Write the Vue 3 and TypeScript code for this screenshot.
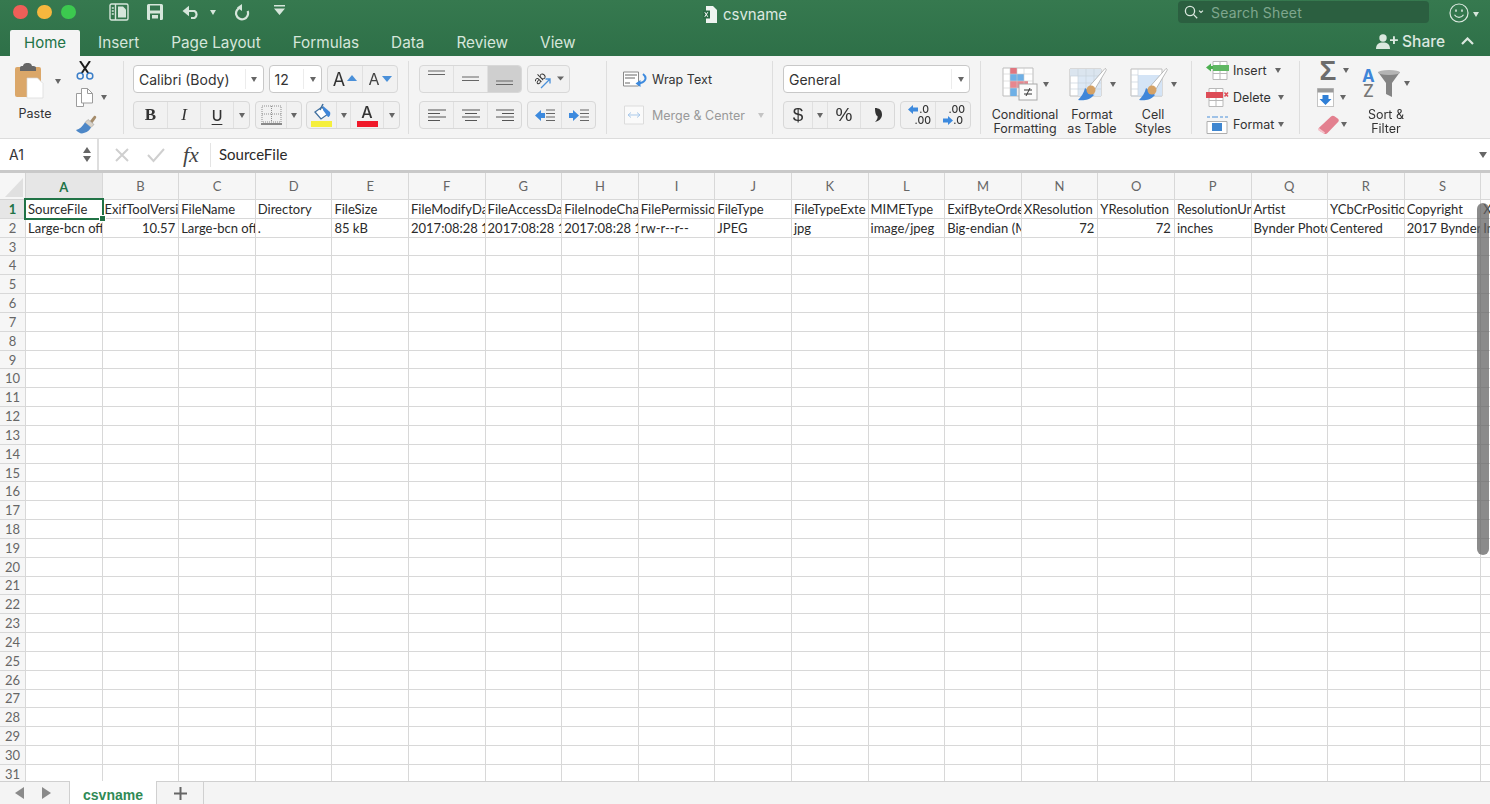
<script setup lang="ts">
const columns = 'ABCDEFGHIJKLMNOPQRST'.split('')
const rowNumbers = Array.from({ length: 31 }, (_, i) => i + 1)
const headerRow = ['SourceFile', 'ExifToolVersi', 'FileName', 'Directory', 'FileSize', 'FileModifyDa', 'FileAccessDa', 'FileInodeCha', 'FilePermissio', 'FileType', 'FileTypeExte', 'MIMEType', 'ExifByteOrde', 'XResolution', 'YResolution', 'ResolutionUn', 'Artist', 'YCbCrPositio', 'Copyright', 'X']
const dataRow = ['Large-bcn off', '10.57', 'Large-bcn off', '.', '85 kB', '2017:08:28 1', '2017:08:28 1', '2017:08:28 1', 'rw-r--r--', 'JPEG', 'jpg', 'image/jpeg', 'Big-endian (M', '72', '72', 'inches', 'Bynder Photo', 'Centered', '2017 Bynder', 'In']
const numericCols = new Set([1, 13, 14])

function cellText(row: number, col: number): string {
  if (row === 1) return headerRow[col]
  if (row === 2) return dataRow[col]
  return ''
}
const tabs = ['Insert', 'Page Layout', 'Formulas', 'Data', 'Review', 'View']
</script>

<template>
  <div class="app">
    <header class="chrome">
      <div class="title-row">
        <div class="title-left">
          <div class="lights">
            <span class="light red"></span><span class="light yellow"></span><span class="light green"></span>
          </div>
          <svg class="qat q1" width="20" height="18" viewBox="0 0 20 18" fill="none" stroke="#d6e6db" stroke-width="1.4">
            <rect x="1" y="1" width="18" height="16" rx="1.5" />
            <path d="M6.5 1v16M2.8 5h2M2.8 8h2M2.8 11h2" />
            <path d="M9 3.5h5l3 3v8H9z" fill="#d6e6db" stroke="none" />
          </svg>
          <svg class="qat q2" width="18" height="18" viewBox="0 0 18 18">
            <path d="M1 2.5A1.5 1.5 0 0 1 2.5 1h13A1.5 1.5 0 0 1 17 2.5v13a1.5 1.5 0 0 1-1.5 1.5h-13A1.5 1.5 0 0 1 1 15.5z" fill="#d6e6db" />
            <rect x="4" y="2.5" width="10" height="5" fill="#35754f" />
            <rect x="4" y="10.5" width="10" height="6.5" fill="#35754f" />
            <rect x="6" y="12" width="6" height="3.5" fill="#d6e6db" />
          </svg>
          <svg class="qat q3" width="19" height="14" viewBox="0 0 19 14" fill="none">
            <path d="M0.5 6 7 .8v10.4z" fill="#d6e6db" />
            <path d="M6 6h6.5a4 4 0 0 1 0 7H9" stroke="#d6e6db" stroke-width="2.2" />
          </svg>
          <span class="caret light-caret q3c"></span>
          <svg class="qat q4" width="16" height="17" viewBox="0 0 16 17" fill="none">
            <path d="M7 3.4A6 6 0 1 0 13.6 7" stroke="#d6e6db" stroke-width="2.2" />
            <path d="M8 0v7l-5-3.500z" fill="#d6e6db" />
          </svg>
          <svg class="qat q5" width="11" height="10" viewBox="0 0 11 10">
            <path d="M0 0h11v1.6H0zM0 3.6h11L5.5 10z" fill="#d6e6db" />
          </svg>
        </div>
        <div class="doc-title">
          <svg width="14" height="17" viewBox="0 0 14 17">
            <path d="M3 0h7l4 4v13H3z" fill="#eef4f0" />
            <rect x="0" y="4.5" width="7" height="8" fill="#2b6a45" />
            <path d="M1.8 6.2l3 4.6M4.8 6.2l-3 4.6" stroke="#fff" stroke-width="1" />
          </svg>
          <span>csvname</span>
        </div>
        <div class="title-right">
          <div class="search">
            <svg width="21" height="15" viewBox="0 0 21 15" fill="none" stroke="#dbe8df" stroke-width="1.3">
              <circle cx="6" cy="6" r="4.6" /><path d="M9.4 9.4l3.8 3.9" />
              <path d="M15 5.600l2 1.900 2-1.900" stroke-width="1.100" />
            </svg>
            <span>Search Sheet</span>
          </div>
          <svg class="smile" width="20" height="20" viewBox="0 0 20 20" fill="none" stroke="#dbe8df" stroke-width="1.2">
            <circle cx="10" cy="10" r="9" />
            <path d="M5.5 11.8c2 3.4 7 3.4 9 0" />
            <path d="M7 6.5v2.2M13 6.5v2.2" stroke-width="1.6" />
          </svg>
          <span class="caret light-caret"></span>
        </div>
      </div>
      <div class="tab-row">
        <nav class="tabs">
          <span class="tab active">Home</span>
          <span v-for="t in tabs" :key="t" class="tab">{{ t }}</span>
        </nav>
        <div class="share">
          <svg width="22" height="15" viewBox="0 0 22 15" fill="#dbe8df">
            <circle cx="7" cy="4" r="3.7" />
            <path d="M0 15c0-5 2.8-6.6 7-6.6s7 1.6 7 6.6z" />
            <path d="M14 5.2h3V2.2h1.9v3h3v1.9h-3v3H17v-3h-3z" />
          </svg>
          <span>Share</span>
          <svg class="chev" width="13" height="8" viewBox="0 0 13 8" fill="none" stroke="#dbe8df" stroke-width="2.2"><path d="M1 7l5.5-5.5L12 7" /></svg>
        </div>
      </div>
    </header>

    <section class="ribbon">
      <!-- Clipboard -->
      <div class="group clipboard">
        <div class="paste">
          <div class="paste-top">
            <svg width="29" height="36" viewBox="0 0 29 36">
              <rect x="0" y="4" width="26" height="30" rx="2" fill="#dba769" />
              <path d="M5 4.5C5 3 6.5 3 8 3c.6-2 1.2-3 4.5-3S16.500 1 17 3c1.500 0 4 0 4 1.500V8H5z" fill="#666" />
              <path d="M12 15h10.500l5.500 5.500V35H12z" fill="#fff" stroke="#d8d8d8" stroke-width=".7" />
            </svg>
            <span class="caret"></span>
          </div>
          <span class="label">Paste</span>
        </div>
        <div class="clip-tools">
          <svg width="18" height="19" viewBox="0 0 18 19" fill="none">
            <path d="M4 0l8.500 12.500M14 0L5.500 12.500" stroke="#1c1c1c" stroke-width="2" />
            <circle cx="4.200" cy="15" r="3" stroke="#3c7fc9" stroke-width="1.500" />
            <circle cx="13.800" cy="15" r="3" stroke="#3c7fc9" stroke-width="1.500" />
          </svg>
          <div class="copy-row">
            <svg width="17" height="19" viewBox="0 0 17 19" fill="#fff" stroke="#9b9b9b">
              <path d="M.5 5.500h7v13h-7z" />
              <path d="M5.500.5h6l5 5v9.500h-11z" />
              <path d="M11.500.5v5h5" fill="none" />
            </svg>
            <span class="caret"></span>
          </div>
          <svg width="21" height="19" viewBox="0 0 21 19">
            <path d="M14 6l4-5c1-1 3 .5 2 2l-3.500 5z" fill="#a58c6b" />
            <path d="M12 4.500l6 5-3 3L9 7.500z" fill="#d9d2c7" stroke="#8d8d8d" stroke-width=".5" />
            <path d="M9 7.500l6 5c-1.500 3-4 5-9 6-2 0-5-2-6-3.500 4-1 6-3.500 9-7.500z" fill="#4d87c7" />
          </svg>
        </div>
      </div>

      <!-- Font -->
      <div class="group font">
        <div class="row">
          <div class="select font-name"><span class="value">Calibri (Body)</span><i class="drop"><span class="caret"></span></i></div>
          <div class="select font-size"><span class="value">12</span><i class="drop"><span class="caret"></span></i></div>
          <div class="bgroup grow">
            <span class="btn w35 big-a">A<svg width="10" height="6" viewBox="0 0 10 6"><path d="M5 0l5 6H0z" fill="#4a90d9" /></svg></span>
            <span class="btn w34 small-a">A<svg width="10" height="6" viewBox="0 0 10 6"><path d="M5 6L0 0h10z" fill="#4a90d9" /></svg></span>
          </div>
        </div>
        <div class="row">
          <div class="bgroup">
            <span class="btn w34 bold">B</span>
            <span class="btn w33 italic">I</span>
            <span class="btn w33 under">U</span>
            <span class="btn w15"><span class="caret"></span></span>
          </div>
          <div class="bgroup">
            <span class="btn w31">
              <svg width="21" height="20" viewBox="0 0 21 20" fill="none">
                <path d="M1 1h19v16H1zM10.500 1v16M1 9h19" stroke="#8f8f8f" stroke-dasharray="1 1" />
                <path d="M0 19h21" stroke="#666" stroke-width="1.500" />
              </svg>
            </span>
            <span class="btn w14"><span class="caret"></span></span>
          </div>
          <div class="bgroup last-g">
            <span class="btn w30">
              <svg width="22" height="24" viewBox="0 0 22 24">
                <path d="M4 9l7-5 6 7-7 5z" fill="#fff" stroke="#41709f" stroke-width="1.300" />
                <path d="M9 7l3-6" stroke="#41709f" stroke-width="1.500" />
                <path d="M12 3l7 6c1 3-1 5-2 5l-5-7z" fill="#3f86d9" />
                <rect x="0" y="18" width="21" height="6" fill="#f5ef3d" />
              </svg>
            </span>
            <span class="btn w14"><span class="caret"></span></span>
            <span class="btn w33 color-a"><span class="color-letter">A</span><i class="redbar"></i></span>
            <span class="btn w15"><span class="caret"></span></span>
          </div>
        </div>
      </div>

      <!-- Alignment -->
      <div class="group align">
        <div class="row">
          <div class="bgroup">
            <span class="btn w34"><svg width="17" height="10" viewBox="0 0 17 10" class="a-top"><path d="M0 1h17M0 4.500h17" stroke="#666" stroke-width="1.100" /></svg></span>
            <span class="btn w34"><svg width="17" height="10" viewBox="0 0 17 10" class="a-mid"><path d="M0 1h17M0 4.500h17" stroke="#666" stroke-width="1.100" /></svg></span>
            <span class="btn w33 pressed"><svg width="17" height="10" viewBox="0 0 17 10" class="a-bot"><path d="M0 1h17M0 4.500h17" stroke="#666" stroke-width="1.100" /></svg></span>
          </div>
          <div class="bgroup">
            <span class="btn w41">
              <svg width="36" height="22" viewBox="0 0 36 22">
                <text x="3" y="14" font-family="Inter, sans-serif" font-size="11" fill="#333" transform="rotate(-45 9 11)">ab</text>
                <path d="M10 20l9-9M14.500 11H19v4.500" fill="none" stroke="#4a90d9" stroke-width="1.300" />
                <path d="M26 8.500h7l-3.500 4z" fill="#666" />
              </svg>
            </span>
          </div>
        </div>
        <div class="row">
          <div class="bgroup">
            <span class="btn w34"><svg width="18" height="13" viewBox="0 0 18 13"><path d="M0 1h18M0 4.500h12M0 8h18M0 11.500h12" stroke="#555" stroke-width="1.100" /></svg></span>
            <span class="btn w34"><svg width="18" height="13" viewBox="0 0 18 13"><path d="M0 1h18M3 4.500h12M0 8h18M3 11.500h12" stroke="#555" stroke-width="1.100" /></svg></span>
            <span class="btn w33"><svg width="18" height="13" viewBox="0 0 18 13"><path d="M0 1h18M6 4.500h12M0 8h18M6 11.500h12" stroke="#555" stroke-width="1.100" /></svg></span>
          </div>
          <div class="bgroup">
            <span class="btn w34">
              <svg width="20" height="13" viewBox="0 0 20 13"><path d="M0 6.500L6 1v3h4v5H6v3z" fill="#3d8ade" /><path d="M11 1h9M11 4.500h9M11 8h9M11 11.500h9" stroke="#666" stroke-width="1.100" /></svg>
            </span>
            <span class="btn w33">
              <svg width="20" height="13" viewBox="0 0 20 13"><path d="M10 6.500L4 1v3H0v5h4v3z" fill="#3d8ade" /><path d="M11 1h9M11 4.500h9M11 8h9M11 11.500h9" stroke="#666" stroke-width="1.100" /></svg>
            </span>
          </div>
        </div>
      </div>

      <!-- Wrap / merge -->
      <div class="group wrap">
        <div class="wrap-row">
          <svg width="24" height="16" viewBox="0 0 24 16" fill="none">
            <path d="M.5 1h15v14H.5z" stroke="#8a8a8a" fill="#fff" />
            <path d="M2 4h12M2 7h10M2 12h5" stroke="#666" />
            <path d="M20 3c5 4 2 9-5 9.500" stroke="#3d8ade" stroke-width="2" />
            <path d="M17.500 9v7l-5-3.500z" fill="#3d8ade" />
          </svg>
          <span>Wrap Text</span>
        </div>
        <div class="wrap-row muted">
          <svg width="24" height="20" viewBox="0 0 24 20" fill="none">
            <path d="M1.500 1h19v18h-19z" fill="#fafafa" stroke="#dcdcdc" />
            <path d="M5 10h12M5 10l3-2.500M5 10l3 2.500M17 10l-3-2.500M17 10l-3 2.500" stroke="#a9c9ea" />
          </svg>
          <span>Merge &amp; Center</span>
          <span class="caret pale"></span>
        </div>
      </div>

      <!-- Number -->
      <div class="group number">
        <div class="row">
          <div class="select general"><span class="value">General</span><i class="drop"><span class="caret"></span></i></div>
        </div>
        <div class="row">
          <div class="bgroup">
            <span class="btn w29 sym">$</span>
            <span class="btn w15"><span class="caret"></span></span>
            <span class="btn w33 sym">%</span>
            <span class="btn w33">
              <svg width="8" height="14" viewBox="0 0 8 14"><path d="M1 0c4 0 7 2 7 6.500 0 4-3 6.500-7 7.500 2-2 3-4 2.500-6C1.500 7.500 1 3 1 0z" fill="#333" /></svg>
            </span>
          </div>
          <div class="bgroup grow">
            <span class="btn w35 dec">
              <svg width="10" height="9" viewBox="0 0 10 9"><path d="M0 4.500L5 0v2.500h5v4H5V9z" fill="#3d8ade" /></svg>
              <span class="dec-a">.0</span><span class="dec-b">.00</span>
            </span>
            <span class="btn w34 dec">
              <span class="dec-c">.00</span><span class="dec-d">.0</span>
              <svg class="dec-arrow" width="10" height="9" viewBox="0 0 10 9"><path d="M10 4.500L5 0v2.500H0v4h5V9z" fill="#3d8ade" /></svg>
            </span>
          </div>
        </div>
      </div>

      <!-- Styles -->
      <div class="group styles">
        <div class="style-item w74">
          <div class="style-icon">
            <svg width="36" height="34" viewBox="0 0 36 34">
              <path d="M1 1h30v28H1z" fill="#fff" stroke="#bdbdbd" />
              <rect x="8" y="1" width="7" height="6" fill="#e0757f" />
              <rect x="8" y="7" width="14" height="7" fill="#6fb0e6" />
              <rect x="8" y="14" width="7" height="7" fill="#6fb0e6" />
              <rect x="8" y="14" width="18" height="7" fill="#e8878f" />
              <rect x="8" y="21" width="7" height="8" fill="#6fb0e6" />
              <path d="M8 1v28M15 1v28M22 1v28M1 7h30M1 14h30M1 21h30" stroke="#cfcfcf" stroke-width=".6" />
              <rect x="17" y="17" width="18" height="16" fill="#fbfbfb" stroke="#a8a8a8" />
              <path d="M22 23h8M22 27h8M28 21l-4 8" stroke="#333" stroke-width="1" fill="none" />
            </svg>
            <span class="caret"></span>
          </div>
          <span class="label">Conditional<br />Formatting</span>
        </div>
        <div class="style-item w60">
          <div class="style-icon tight">
            <svg width="38" height="34" viewBox="0 0 38 34">
              <path d="M1 2h31v27H1z" fill="#fff" stroke="#bdbdbd" />
              <rect x="1" y="2" width="31" height="7" fill="#dbe5ef" />
              <rect x="9" y="9" width="23" height="20" fill="#dce8f5" />
              <path d="M9 2v27M17 2v27M25 2v27M1 9h31M1 16h31M1 22h31" stroke="#c8d2dc" stroke-width=".7" />
              <path d="M36 1.500c1 0 1.500 1 1 2L26 22l-5-3.500z" fill="#fff" stroke="#a0a0a0" stroke-width=".7" />
              <path d="M16 21c-1 5-4 9-7 12 5 1 12 0 16-5z" fill="#3f86d9" />
              <circle cx="22" cy="23" r="4.500" fill="#d5a266" />
            </svg>
            <span class="caret"></span>
          </div>
          <span class="label">Format<br />as Table</span>
        </div>
        <div class="style-item w62">
          <div class="style-icon tight">
            <svg width="38" height="34" viewBox="0 0 38 34">
              <path d="M1 2h31v27H1z" fill="#fff" stroke="#bdbdbd" />
              <rect x="8" y="8" width="24" height="21" fill="#d4e4f6" />
              <path d="M8 2v6M1 8h7M1 15h7M1 22h7M8 8v21M1 29h31" stroke="#c8d2dc" stroke-width=".7" />
              <path d="M36 1.500c1 0 1.500 1 1 2L26 22l-5-3.500z" fill="#fff" stroke="#a0a0a0" stroke-width=".7" />
              <path d="M16 21c-1 5-4 9-7 12 5 1 12 0 16-5z" fill="#3f86d9" />
              <circle cx="22" cy="23" r="4.500" fill="#d5a266" />
            </svg>
            <span class="caret"></span>
          </div>
          <span class="label">Cell<br />Styles</span>
        </div>
      </div>

      <!-- Cells -->
      <div class="group cells">
        <div class="cell-row r1">
          <svg width="23" height="19" viewBox="0 0 23 19">
            <path d="M7 .5h14v18H7zM14 .5v18M7 6h14M7 12.500h14" fill="#fff" stroke="#b9b9b9" />
            <path d="M0 6.500L5 2.500v2.500h2V8H5v2.500z" fill="#4caf50" />
            <rect x="7" y="4" width="16" height="6" fill="#5fb763" />
          </svg>
          <span>Insert</span><span class="caret"></span>
        </div>
        <div class="cell-row r2">
          <svg width="23" height="19" viewBox="0 0 23 19">
            <path d="M3 .5h14v18H3zM10 .5v18M3 6h14M3 12.500h14" fill="#fff" stroke="#b9b9b9" />
            <rect x="0" y="4" width="17" height="6" fill="#dd4d57" />
            <path d="M18.500 4.500l3.500 4M22 4.500l-3.500 4" stroke="#dd4d57" stroke-width="1.500" />
          </svg>
          <span>Delete</span><span class="caret"></span>
        </div>
        <div class="cell-row r3">
          <svg width="23" height="19" viewBox="0 0 23 19">
            <path d="M1 2h3M6 2h6M14 2h3M19 2h3" stroke="#4a90d9" stroke-width="1.200" />
            <path d="M1 6.500h20v12H1z" fill="#fff" stroke="#aeaeae" />
            <rect x="6" y="8" width="10" height="8" fill="#3f86d0" />
          </svg>
          <span>Format</span><span class="caret"></span>
        </div>
      </div>

      <!-- Editing -->
      <div class="editing">
        <div class="edit-col">
          <div class="edit-row e1"><span class="sigma">Σ</span><span class="caret"></span></div>
          <div class="edit-row e2">
            <svg width="18" height="19" viewBox="0 0 18 19">
              <rect x=".5" y=".5" width="16" height="18" fill="#fff" stroke="#c4c4c4" />
              <rect x=".5" y=".5" width="16" height="4" fill="#9a9a9a" />
              <path d="M5.500 7h6v4h3L8.500 17 2.500 11h3z" fill="#2f7fd6" />
            </svg>
            <span class="caret"></span>
          </div>
          <div class="edit-row e3">
            <svg width="23" height="20" viewBox="0 0 23 20">
              <path d="M14 1.500c1-1 2.500-1 3.500-.3l3.500 2.500c1 .8 1 2 .3 3L10.500 18c-.8 1-2 1.300-3 .7l-5-3c-1-.7-1.300-2-.5-3z" fill="#e3808f" />
              <path d="M2 13l6 4.500-1 1.300-5-3c-1-.7-1-1.800 0-2.800z" fill="#f5c2ca" />
            </svg>
            <span class="caret"></span>
          </div>
        </div>
        <div class="sort">
          <div class="sort-icon">
            <svg class="sort-svg" width="40" height="30" viewBox="0 0 40 30">
              <text x="0" y="14" font-family="Inter, sans-serif" font-weight="700" font-size="17" fill="#3f86d9">A</text>
              <text x="1" y="29" font-family="Inter, sans-serif" font-weight="500" font-size="17" fill="#777">Z</text>
              <path d="M16 4h22l-8 11v14l-6-3V15z" fill="#848484" />
              <ellipse cx="27" cy="4.500" rx="11" ry="2.500" fill="#b4b4b4" />
            </svg>
            <span class="caret"></span>
          </div>
          <span class="label">Sort &amp;<br />Filter</span>
        </div>
      </div>
    </section>

    <section class="formula">
      <div class="namebox">
        <span>A1</span>
        <span class="spin"><i class="up"></i><i class="down"></i></span>
      </div>
      <div class="f-tools">
        <svg width="16" height="16" viewBox="0 0 16 16" fill="none" stroke="#cfcfcf" stroke-width="2"><path d="M2 2l12 12M14 2L2 14" /></svg>
        <svg width="18" height="16" viewBox="0 0 18 16" fill="none" stroke="#cfcfcf" stroke-width="2"><path d="M1 8l5.500 6L17 2" /></svg>
        <span class="fx">fx</span>
      </div>
      <div class="f-text">SourceFile</div>
      <span class="caret f-caret"></span>
    </section>

    <section class="sheet">
      <div class="grid">
        <div class="corner"><i></i></div>
        <div v-for="(c, ci) in columns" :key="c" class="col-head" :class="{ on: ci === 0 }">{{ c }}</div>
        <template v-for="r in rowNumbers" :key="r">
          <div class="row-head" :class="{ on: r === 1 }">{{ r }}</div>
          <div
            v-for="(c, ci) in columns"
            :key="c + r"
            class="cell"
            :class="{ num: r === 2 && numericCols.has(ci), selected: r === 1 && ci === 0 }"
          >
            <span class="cell-text">{{ cellText(r, ci) }}</span>
            <template v-if="r === 1 && ci === 0"><i class="sel-box"></i><i class="sel-handle"></i></template>
          </div>
        </template>
      </div>
      <div class="scroll-thumb"></div>
    </section>

    <footer class="sheetbar">
      <div class="nav">
        <svg width="9" height="12" viewBox="0 0 9 12"><path d="M9 0v12L0 6z" fill="#8a8a8a" /></svg>
        <svg width="9" height="12" viewBox="0 0 9 12"><path d="M0 0v12l9-6z" fill="#8a8a8a" /></svg>
      </div>
      <div class="sheet-tab">csvname</div>
      <div class="add">
        <svg width="13" height="13" viewBox="0 0 13 13"><path d="M6.500 0v13M0 6.500h13" stroke="#666" stroke-width="2" /></svg>
      </div>
    </footer>
  </div>
</template>

<style>
html, body { margin: 0; overflow: hidden; background: #fff; }
</style>

<style scoped>
.app {
  width: 1490px; height: 804px; overflow: hidden; display: flex; flex-direction: column;
  font-family: Inter, "Liberation Sans", sans-serif; color: #333; filter: blur(0.35px);
}
i { font-style: normal; display: block; }
.caret {
  display: inline-block; flex: none; width: 0; height: 0;
  border-left: 3.5px solid transparent; border-right: 3.5px solid transparent; border-top: 5px solid #666;
}
.caret.pale { border-top-color: #c4c4c4; }
.light-caret { border-top-color: #d6e6db; }

/* title bar */
.chrome { height: 56px; flex: none; background: linear-gradient(#36794f, #2e7048); color: #d6e6db; }
.title-row { height: 28px; display: grid; grid-template-columns: 1fr auto 1fr; align-items: center; }
.title-left { display: flex; align-items: center; margin-top: -4px; }
.lights { display: flex; gap: 9.500px; margin-left: 13px; }
.light { width: 14.500px; height: 14.500px; border-radius: 50%; }
.light.red { background: #ee5f58; }
.light.yellow { background: #f6b73e; }
.light.green { background: #3cc94f; }
.qat { flex: none; }
.q1 { margin-left: 33px; }
.q2 { margin-left: 17px; }
.q3 { margin-left: 18px; }
.q3c { margin-left: 9px; }
.q4 { margin-left: 18px; }
.q5 { margin-left: 24px; margin-top: -4px; }
.doc-title { display: flex; align-items: center; gap: 6px; font-size: 15px; color: #dce8e0; }
.title-right { display: flex; align-items: center; justify-content: flex-end; }
.search {
  width: 251px; height: 22px; box-sizing: border-box; background: #2b5f40; border-radius: 4px; margin-top: -4px;
  display: flex; align-items: center; gap: 6px; padding-left: 6px; font-size: 14px; color: #7fa78e; letter-spacing: .2px;
}
.smile { margin-left: 20px; margin-top: -2px; }
.title-right .caret { margin: 0 11px 0 4px; }
.tab-row { height: 28px; display: flex; justify-content: space-between; align-items: flex-end; }
.tabs { display: flex; margin-left: 10px; }
.tab { padding: 0 16px; height: 26px; line-height: 26px; font-size: 15.300px; color: #d6e6db; white-space: nowrap; }
.tab.active { padding: 0 14px; margin-right: 2px; background: #f4f4f4; color: #217346; border-radius: 2px 2px 0 0; font-size: 15px; }
.share { display: flex; align-items: center; height: 28px; font-size: 15.500px; font-weight: 500; color: #dce8e0; margin-right: 16px; gap: 4px; padding-bottom: 2px; box-sizing: border-box; }
.chev { margin-left: 12px; }

/* ribbon */
.ribbon { height: 82px; flex: none; background: #f4f4f4; border-bottom: 1px solid #dcdcdc; display: flex; align-items: flex-start; }
.group { height: 73px; margin-top: 5px; box-sizing: border-box; border-right: 1px solid #dedede; flex: none; }
.label { font-size: 12.500px; line-height: 14px; color: #333; text-align: center; white-space: nowrap; }
.clipboard { width: 124px; display: flex; }
.paste { width: 72px; padding-left: 15px; box-sizing: border-box; display: flex; flex-direction: column; }
.paste-top { display: flex; align-items: center; gap: 11px; height: 39px; }
.paste-top .caret { margin-top: 2px; }
.paste .label { width: 40px; margin-top: 7px; }
.clip-tools { display: flex; flex-direction: column; gap: 8px; padding-left: 4px; }
.copy-row { display: flex; align-items: center; gap: 8px; }

.row { display: flex; gap: 5px; height: 28px; }
.font, .align, .number { padding-top: 4px; display: flex; flex-direction: column; gap: 8px; }
.font { width: 285px; padding-left: 9px; }
.font .row { width: 265px; }
.align { width: 198px; padding-left: 10px; }
.number { width: 208px; padding-left: 10px; }
.number .row { width: 187px; }
.select {
  background: #fff; border: 1px solid #c8c8c8; border-radius: 4px; box-sizing: border-box; height: 28px;
  display: flex; align-items: center; font-size: 14px; color: #333;
}
.select .value { flex: 1; padding-left: 5px; white-space: nowrap; }
.drop { width: 17px; height: 20px; border-left: 1px solid #ececec; display: flex; align-items: center; justify-content: center; }
.font-name { width: 132px; }
.font-size { width: 54px; }
.general { width: 187px; }
.bgroup {
  display: flex; height: 28px; box-sizing: border-box; background: #f1f1f1; border: 1px solid #d8d8d8; border-radius: 4px; flex: none;
}
.grow { flex: 1; }
.last-g { margin-left: -1px; flex: 1; }
.btn { display: flex; align-items: center; justify-content: center; box-sizing: border-box; border-right: 1px solid #e0e0e0; position: relative; flex: none; font-size: 14px; }
.btn:last-child { border-right: 0; }
.grow .btn:last-child { flex: 1; }
.w14 { width: 14px; } .w15 { width: 15px; } .w29 { width: 29px; } .w30 { width: 30px; } .w31 { width: 31px; }
.w33 { width: 33px; } .w34 { width: 34px; } .w35 { width: 35px; } .w41 { width: 41px; }
.pressed { background: #cfcfcf; border-radius: 0 3px 3px 0; }
.a-top { margin-top: -9px; }
.a-mid { margin-top: 3px; }
.a-bot { margin-top: 11px; }
.big-a { font-size: 18px; gap: 2px; color: #333; }
.big-a svg { margin-bottom: 3px; }
.small-a { font-size: 16px; gap: 2px; color: #444; }
.bold { font-family: "Liberation Serif", serif; font-weight: 700; font-size: 17px; }
.italic { font-family: "Liberation Serif", serif; font-style: italic; font-size: 17px; }
.under { font-size: 14.500px; text-decoration: underline; text-underline-offset: 3px; font-weight: 500; }
.color-a { flex-direction: column; justify-content: flex-start; }
.color-letter { font-size: 16px; font-weight: 500; line-height: 18px; margin-top: 1px; }
.redbar { width: 21px; height: 6px; background: #f0192a; }
.sym { font-size: 19px; font-family: "Liberation Sans", sans-serif; }
.dec { position: relative; font-size: 10.500px; color: #333; font-weight: 500; }
.dec svg { position: absolute; left: 7px; top: 3px; }
.dec svg.dec-arrow { left: 7px; top: 14px; }
.dec-a { position: absolute; right: 6px; top: 1px; }
.dec-b { position: absolute; right: 4px; top: 12px; }
.dec-c { position: absolute; right: 5px; top: 1px; }
.dec-d { position: absolute; right: 7px; top: 12px; }

.wrap { width: 166px; padding-left: 16px; display: flex; flex-direction: column; font-size: 12.500px; }
.wrap-row { display: flex; align-items: center; gap: 5px; height: 20px; margin-top: 8px; white-space: nowrap; color: #333; }
.wrap-row.muted { margin-top: 16px; color: #999; }
.wrap-row.muted .caret { margin-left: 8px; }

.styles { width: 211px; display: flex; padding-left: 7px; }
.style-item { display: flex; flex-direction: column; align-items: center; flex: none; }
.w74 { width: 74px; } .w60 { width: 60px; } .w62 { width: 62px; }
.style-icon { display: flex; align-items: center; gap: 5px; height: 34px; margin-top: 6px; margin-bottom: 6.500px; }
.style-icon.tight { gap: 3px; }

.cells { width: 108px; padding-left: 14px; display: flex; flex-direction: column; justify-content: center; gap: 9px; font-size: 12.500px; }
.cell-row { display: flex; align-items: center; height: 18px; white-space: nowrap; }
.cell-row svg { margin-right: 4px; flex: none; }
.r1 .caret { margin-left: 8px; }
.r2 .caret { margin-left: 7px; }
.r3 .caret { margin-left: 4px; }
.editing { display: flex; margin-top: 5px; height: 73px; padding-left: 17px; }
.edit-col { width: 45px; display: flex; flex-direction: column; justify-content: center; gap: 9px; }
.edit-row { display: flex; align-items: center; height: 18px; }
.e1 { gap: 4px; }
.e2 { gap: 5px; }
.e3 { gap: 1px; }
.sigma { width: 22px; font-size: 28px; font-weight: 700; color: #6c6c6c; line-height: 18px; font-family: "Liberation Sans", sans-serif; text-align: center; }
.sort { display: flex; flex-direction: column; align-items: center; width: 48px; }
.sort-svg { overflow: visible; }
.sort-icon { display: flex; align-items: center; gap: 2px; height: 30px; margin-top: 7px; margin-bottom: 10px; }

/* formula bar */
.formula { height: 31px; flex: none; background: #fff; border-bottom: 3px solid #c9c9c9; display: flex; align-items: center; position: relative; }
.namebox { width: 99px; height: 31px; box-sizing: border-box; border-right: 2px solid #dedede; display: flex; align-items: center; justify-content: space-between; padding-left: 9px; font-size: 14px; color: #333; flex: none; }
.spin { display: flex; flex-direction: column; gap: 3px; margin-right: 6px; }
.spin .up { border-left: 4px solid transparent; border-right: 4px solid transparent; border-bottom: 6px solid #666; }
.spin .down { border-left: 4px solid transparent; border-right: 4px solid transparent; border-top: 6px solid #666; }
.f-tools { width: 112px; height: 24px; box-sizing: border-box; display: flex; align-items: center; border-right: 1px solid #e4e4e4; padding-left: 15px; gap: 17px; flex: none; }
.fx { font-family: "Liberation Serif", serif; font-style: italic; font-size: 22px; color: #444; margin-left: 1px; }
.f-text { padding-left: 8px; padding-bottom: 2px; font-family: Lato, sans-serif; font-size: 15px; color: #2a2a2a; }
.f-caret { position: absolute; right: 3px; top: 13px; border-left-width: 4px; border-right-width: 4px; border-top-width: 6px; }

/* sheet */
.sheet { position: relative; flex: 1; min-height: 0; overflow: hidden; background: #fff; }
.grid {
  display: grid; width: max-content; grid-template-columns: 26px repeat(20, 76.6px); grid-template-rows: 27px repeat(31, 18.83px);
  font-family: Lato, "Liberation Sans", sans-serif; font-size: 13px; color: #2a2a2a;
}
.corner { background: #f6f6f6; border-right: 1px solid #d4d4d4; border-bottom: 1px solid #d4d4d4; box-sizing: border-box; position: relative; }
.corner i { position: absolute; left: 5px; bottom: 2px; width: 0; height: 0; border-left: 18px solid transparent; border-bottom: 19px solid #e0e0e0; }
.col-head, .row-head {
  background: #f6f6f6; box-sizing: border-box; border-right: 1px solid #d8d8d8; border-bottom: 1px solid #d8d8d8;
  display: flex; align-items: center; justify-content: center; color: #666; font-size: 13px;
}
.col-head.on { background: #e6e6e6; color: #217346; font-weight: 700; border-bottom: 0; }
.row-head.on { background: #e6e6e6; color: #217346; font-weight: 700; }
.cell {
  box-sizing: border-box; border-right: 1px solid #d8d8d8; border-bottom: 1px solid #d8d8d8; overflow: hidden;
  white-space: nowrap; padding: 0 0 0 2px; line-height: 18px; min-width: 0; position: relative;
}
.cell-text { display: block; }
.cell.num { text-align: right; padding-right: 3px; }
.cell.selected { overflow: visible; }
.sel-box { position: absolute; left: -2px; top: -2px; right: -2px; bottom: -2px; border: 2px solid #217346; z-index: 2; pointer-events: none; }
.sel-handle { position: absolute; right: -4px; bottom: -4px; background: #217346; border: 1px solid #fff; z-index: 3; width: 5px; height: 5px; }
.scroll-thumb { position: absolute; left: 1477px; top: 30px; width: 12px; height: 352px; background: rgba(100, 100, 100, .75); border-radius: 6px; z-index: 4; }

/* sheet bar */
.sheetbar { height: 23px; flex: none; background: #f4f4f4; border-top: 1px solid #d0d0d0; box-sizing: border-box; display: flex; }
.nav { width: 70px; display: flex; align-items: center; gap: 18px; padding-left: 15px; box-sizing: border-box; border-right: 1px solid #d0d0d0; }
.sheet-tab { width: 87px; margin-top: -1px; background: #fff; box-sizing: border-box; border-right: 1px solid #d0d0d0; text-align: center; line-height: 29px; font-family: "Liberation Sans", sans-serif; font-weight: 700; font-size: 14px; color: #2f8a55; }
.add { width: 46px; display: flex; align-items: center; justify-content: center; border-right: 1px solid #d0d0d0; }
</style>
